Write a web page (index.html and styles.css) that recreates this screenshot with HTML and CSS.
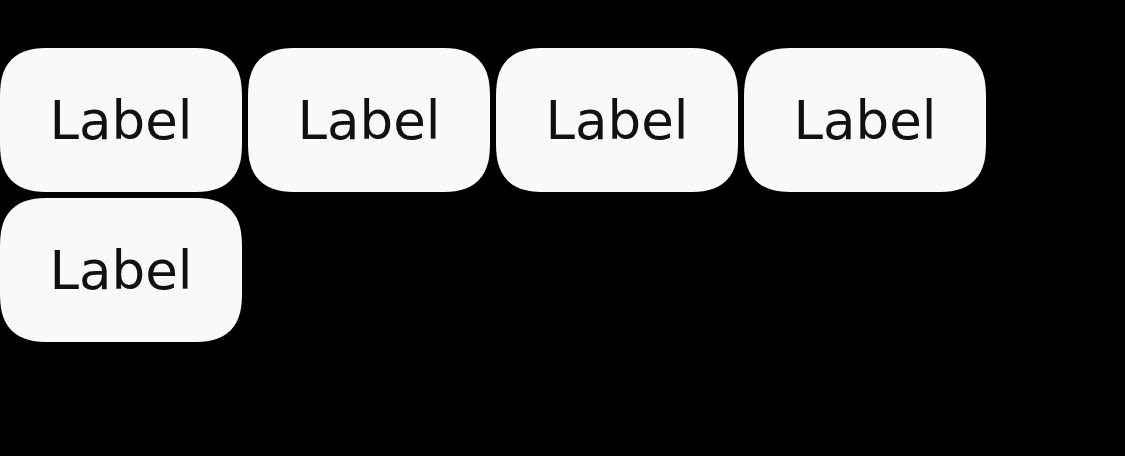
FILE: index.html
```html
<!DOCTYPE html>
<html lang="en">
<head>
<meta charset="utf-8">
<title>Labels</title>
<link rel="stylesheet" href="styles.css">
</head>
<body>
<main class="chips">
<button class="chip" type="button">Label</button>
<button class="chip" type="button">Label</button>
<button class="chip" type="button">Label</button>
<button class="chip" type="button">Label</button>
<button class="chip" type="button">Label</button>
</main>
</body>
</html>
```

FILE: styles.css
```css
body {
  margin: 0;
  background: #000;
}

.chips {
  display: flex;
  flex-wrap: wrap;
  gap: 6px;
  padding: 48px 0;
}

.chip {
  min-width: 242px;
  padding: 37px 48px 35px;
  border: 0;
  border-radius: 50px;
  corner-shape: superellipse(1.4);
  background: #f9f9f9;
  color: #111;
  font: 400 53px/72px "DejaVu Sans", sans-serif;
}
```
